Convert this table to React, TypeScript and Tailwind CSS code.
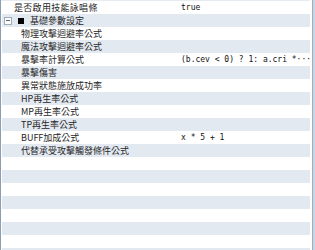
import React from "react";

type Row = { label?: string; value?: string; indent: number; group?: boolean; wide?: boolean };

const rows: Row[] = [
  { label: "是否啟用技能詠唱條", value: "true", indent: 0, wide: true },
  { label: "基礎參數設定", indent: 0, group: true },
  { label: "物理攻擊迴避率公式", indent: 1 },
  { label: "魔法攻擊迴避率公式", indent: 1 },
  { label: "暴擊率計算公式", value: "(b.cev < 0) ? 1: a.cri *···", indent: 1 },
  { label: "暴擊傷害", indent: 1 },
  { label: "異常狀態施放成功率", indent: 1 },
  { label: "HP再生率公式", indent: 1 },
  { label: "MP再生率公式", indent: 1 },
  { label: "TP再生率公式", indent: 1 },
  { label: "BUFF加成公式", value: "x * 5 + 1", indent: 1 },
  { label: "代替承受攻擊觸發條件公式", indent: 1 },
];

const total = 20;

export default function App() {
  const all: Row[] = [...rows];
  while (all.length < total) all.push({ indent: 0 });
  return (
    <div className="w-[315px] h-[250px] bg-white flex overflow-hidden">
      <div className="w-px bg-[#8d9cb2] shrink-0" />
      <div className="flex-1 flex flex-col pl-px overflow-hidden border-t border-[#e6ebf2]">
        {all.map((r, i) => (
          <div
            key={i}
            className={`h-[13px] shrink-0 flex items-center ${i % 2 === 1 ? "bg-[#e3e9f1]" : "bg-white"}`}
          >
            <div className="w-[179px] shrink-0 flex items-center h-full">
              {r.group ? (
                <>
                  <div className="ml-[2px] w-[8px] h-[8px] border border-[#a3adba] bg-white flex items-center justify-center shrink-0">
                    <div className="w-[4px] h-px bg-[#56657a]" />
                  </div>
                  <div className="ml-[6px] w-[6px] h-[6px] bg-black shrink-0" />
                  <span
                    className="ml-[6px] text-[9px] leading-[13px] text-[#262626] whitespace-nowrap"
                    style={{ fontFamily: '"Noto Sans CJK TC", "Noto Sans", sans-serif' }}
                  >
                    {r.label}
                  </span>
                </>
              ) : r.label ? (
                <span
                  className={`${r.indent ? "ml-[19px]" : "ml-[12px]"} ${r.wide ? "tracking-[0.3px]" : ""} text-[9px] leading-[13px] text-[#262626] whitespace-nowrap`}
                  style={{ fontFamily: '"Noto Sans CJK TC", "Noto Sans", sans-serif' }}
                >
                  {r.label}
                </span>
              ) : null}
            </div>
            {r.value ? (
              <span
                className="text-[8px] leading-[13px] text-[#111] whitespace-nowrap"
                style={{ fontFamily: '"DejaVu Sans Mono", "Liberation Mono", monospace' }}
              >
                {r.value}
              </span>
            ) : null}
          </div>
        ))}
      </div>
      <div className="w-[2px] bg-white shrink-0" />
      <div className="w-px bg-[#a7acb3] shrink-0" />
      <div className="w-[2px] bg-[#c4d6ea] shrink-0" />
    </div>
  );
}
